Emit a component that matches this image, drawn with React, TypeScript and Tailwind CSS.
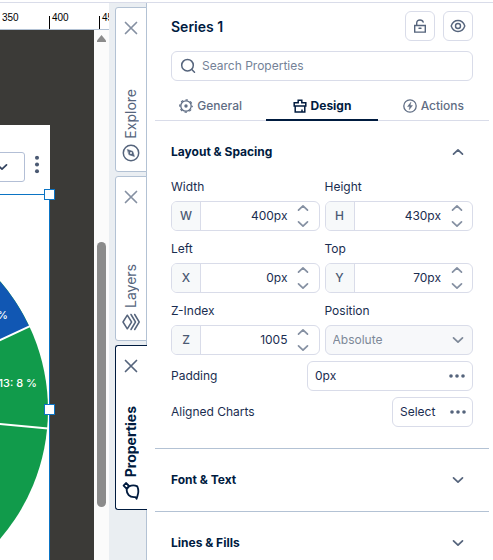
import React from "react";

type IconProps = { className?: string };

const stroke = {
  fill: "none",
  stroke: "currentColor",
  strokeWidth: 1.5,
  strokeLinecap: "round" as const,
  strokeLinejoin: "round" as const,
};

function CloseIcon({ className }: IconProps) {
  return (
    <svg viewBox="0 0 14 14" className={className} {...stroke} strokeWidth={1.7} aria-hidden="true">
      <path d="M1.500 1.500l11 11M12.500 1.500l-11 11" />
    </svg>
  );
}

function ChevronIcon({ up = false, className }: IconProps & { up?: boolean }) {
  return (
    <svg viewBox="0 0 12 8" className={className} {...stroke} strokeWidth={1.7} aria-hidden="true">
      <path d={up ? "M1.500 6.200L6 1.800l4.500 4.400" : "M1.500 1.800L6 6.200l4.500-4.400"} />
    </svg>
  );
}

function DotsIcon({ className }: IconProps) {
  return (
    <svg viewBox="0 0 16 4" className={className} fill="currentColor" aria-hidden="true">
      <circle cx="2" cy="2" r="1.8" />
      <circle cx="8" cy="2" r="1.8" />
      <circle cx="14" cy="2" r="1.8" />
    </svg>
  );
}

function CompassIcon() {
  return (
    <svg viewBox="0 0 18 18" className="size-[18px] shrink-0" {...stroke} aria-hidden="true">
      <circle cx="9" cy="9" r="7.7" />
      <path d="M5.600 5.600l5.200 1.800 1.600 5-5.200-1.600z" fill="currentColor" strokeWidth="0.600" />
      <circle cx="9" cy="9" r="1" fill="white" stroke="none" />
    </svg>
  );
}

function LayersIcon() {
  return (
    <svg viewBox="0 0 18 18" className="size-[18px] shrink-0" {...stroke} strokeWidth={1.500} aria-hidden="true">
      <path d="M5.300 2.200L9.600 9l-4.300 6.800L1 9z" />
      <path d="M9 1.500L13.500 9 9 16.500M12.700 1.500L17.200 9l-4.500 7.500" />
    </svg>
  );
}

function PropertiesIcon() {
  return (
    <svg viewBox="0 0 18 18" className="size-[18px] shrink-0" {...stroke} strokeWidth={1.800} aria-hidden="true">
      <path d="M4 1L7 4 4.800 6.800 1.600 3.600z" />
      <path d="M7 4.400c2.600-1.300 6-1.300 8.300 0 1.200 2.800 1.300 6.200.3 9l-1 3.400-1.200-1.700c-3 .3-5.200-.3-6.700-2-1.500-1.700-2.300-4-1.900-6.300z" />
    </svg>
  );
}

function GearIcon() {
  return (
    <svg viewBox="0 0 14 14" className="size-[14px] shrink-0" fill="none" stroke="currentColor" aria-hidden="true">
      <circle cx="7" cy="7" r="5.200" strokeWidth="1.300" />
      <circle cx="7" cy="7" r="6.200" strokeWidth="1.300" strokeDasharray="2.400 2.470" strokeDashoffset="1.200" />
      <circle cx="7" cy="7" r="1.700" fill="currentColor" stroke="none" />
    </svg>
  );
}

function BrushIcon() {
  return (
    <svg viewBox="0 0 14 14" className="size-[14px] shrink-0" {...stroke} strokeWidth={1.500} strokeLinecap="butt" strokeLinejoin="miter" aria-hidden="true">
      <path d="M5.200 3.800V1.200h3.600v2.600h4V7H1.200V3.800z" />
      <path d="M2.200 7v6h9.600V7M9 13v-2.500" />
    </svg>
  );
}

function BoltIcon() {
  return (
    <svg viewBox="0 0 14 14" className="size-[14px] shrink-0" {...stroke} strokeWidth={1.300} aria-hidden="true">
      <circle cx="7" cy="7" r="6.200" />
      <path d="M7.800 3.300L4.500 7.600h2.200l-.5 3.200 3.300-4.300H7.300z" fill="currentColor" strokeWidth="0.400" />
    </svg>
  );
}

function LockIcon() {
  return (
    <svg viewBox="0 0 14 14" className="size-[14px]" {...stroke} strokeWidth={1.400} strokeLinejoin="miter" aria-hidden="true">
      <path d="M1.700 6.500h10.600v6.600H1.700z" />
      <path d="M3.700 6.300V4.200C3.700 2.200 5 1 7 1c1.700 0 2.900.8 3.200 2.100M6 9.300h2" />
    </svg>
  );
}

function EyeIcon() {
  return (
    <svg viewBox="0 0 16 14" className="h-[14px] w-4" {...stroke} strokeWidth={1.400} aria-hidden="true">
      <path d="M1.200 7C2.500 3.300 5 1.500 8 1.500s5.500 1.800 6.800 5.500c-1.300 3.700-3.800 5.500-6.800 5.500S2.500 10.700 1.200 7z" />
      <circle cx="8" cy="7" r="2.500" />
    </svg>
  );
}

function SearchIcon() {
  return (
    <svg viewBox="0 0 16 16" className="size-4 shrink-0 text-[#55647c]" {...stroke} aria-hidden="true">
      <circle cx="7.500" cy="7.200" r="5.800" />
      <path d="M11.800 11.500l2.700 2.700" />
    </svg>
  );
}

function Ruler() {
  return (
    <div className="flex h-[27px] shrink-0 overflow-hidden border-b border-[#b3c2d4] bg-white">
      {["350", "400", "450"].map((mark, i) => (
        <div key={mark} className={`flex w-[50px] shrink-0 items-end gap-[2px] ${i === 0 ? "-ml-px" : ""}`}>
          <span className="h-[13px] w-px bg-black" />
          <span className="pb-1 font-['Liberation_Sans',Arial,sans-serif] text-[10px] leading-[14px] text-black">{mark}</span>
        </div>
      ))}
    </div>
  );
}

function Canvas() {
  return (
    <div className="relative min-w-0 flex-1 overflow-hidden bg-[#3b3a37]">
      <div className="absolute top-[95px] right-[44px] bottom-0 left-0 bg-white">
        <div className="flex items-center justify-end gap-[7px] pt-[27px] pr-2 text-[#4b5a73]">
          <button type="button" aria-label="Chart options" className="flex h-[30px] w-[60px] shrink-0 items-center justify-end rounded-[3px] border border-[#b3bfd6] pr-4">
            <ChevronIcon className="h-2 w-3 shrink-0 text-[#33435f]" />
          </button>
          <button type="button" aria-label="More" className="flex w-[10px] shrink-0 justify-center">
            <DotsIcon className="mb-[6px] h-[5px] w-[18px] shrink-0 rotate-90" />
          </button>
        </div>
      </div>
      <svg viewBox="0 0 94 530" className="absolute top-0 right-0 h-[530px] w-[94px] overflow-visible" aria-label="Pie chart">
        <circle cx="-149.300" cy="380" r="197.300" fill="#119b4b" />
        <path d="M-149.300 380L29.200 296.500A197.300 197.300 0 0 0 -149.300 182.700z" fill="#1157b3" />
        <path d="M-149.300 380L30 296.200M-149.300 380L48 398.500" stroke="white" strokeWidth="2" />
        <g fill="white" className="font-[Inter,sans-serif] text-[11px] font-medium" textAnchor="end">
          <text x="8" y="289">%</text>
          <text x="37" y="357">13: 8 %</text>
        </g>
        <path d="M-400 164.500H49.500V530" fill="none" stroke="#0b74c4" />
        <g fill="white" stroke="#0b74c4">
          <rect x="44.500" y="159.500" width="10" height="10" />
          <rect x="44.500" y="374.500" width="10" height="10" />
        </g>
      </svg>
    </div>
  );
}

function Scrollbar() {
  return (
    <div className="flex w-[15px] shrink-0 flex-col items-center bg-[#fbfbfb] pt-[5px]">
      <svg viewBox="0 0 9 7" className="h-[7px] w-[9px]" fill="#8b8b8b" aria-hidden="true">
        <path d="M4.500 0L9 5.500V7H0V5.500z" />
      </svg>
      <div className="mt-[200px] h-[265px] w-[9px] rounded-full bg-[#8b8b8b]" />
    </div>
  );
}

function SideTab({ label, icon, active = false }: { label: string; icon: React.ReactNode; active?: boolean }) {
  return (
    <div
      className={`flex h-[165px] flex-col items-center justify-between rounded-l-[3px] border bg-white pt-[13px] pb-[9px] ${
        active ? "border-r-0 border-[#001b3f] pr-px text-[#001b3f]" : "border-[#b3c2d4] text-[#55647c]"
      }`}
    >
      <button type="button" aria-label={`Close ${label}`} className="flex">
        <CloseIcon className={active ? "size-[14px] text-[#55647c]" : "size-[14px] text-[#8590a2]"} />
      </button>
      <button type="button" className="flex flex-col items-center gap-[5px]">
        <span className={`rotate-180 text-[14px] leading-[18px] [writing-mode:vertical-rl] ${active ? "font-bold" : ""}`}>{label}</span>
        {icon}
      </button>
    </div>
  );
}

function NumberField({ label, prefix, value }: { label: string; prefix: string; value: string }) {
  const id = `field-${prefix}`;
  return (
    <div className="flex min-w-0 flex-col gap-1">
      <label htmlFor={id} className="leading-[20px]">
        {label}
      </label>
      <div className="flex h-[30px] overflow-hidden rounded-[6px] border border-[#d9dce9] bg-white">
        <span className="flex w-[29px] shrink-0 items-center justify-center border-r border-[#d9dce9] bg-[#f7f9fa] font-medium text-[#4b5a73]">{prefix}</span>
        <input id={id} type="text" defaultValue={value} className="min-w-0 flex-1 text-right outline-none" />
        <div className="flex w-[31px] shrink-0 flex-col items-center justify-between py-[2px] text-[#8590a2]">
          <button type="button" aria-label={`Increase ${label}`} className="flex">
            <ChevronIcon up className="h-2 w-3" />
          </button>
          <button type="button" aria-label={`Decrease ${label}`} className="flex">
            <ChevronIcon className="h-2 w-3" />
          </button>
        </div>
      </div>
    </div>
  );
}

function PositionField() {
  return (
    <div className="flex min-w-0 flex-col gap-1">
      <label htmlFor="position" className="leading-[20px]">
        Position
      </label>
      <div className="relative h-[30px]">
        <select
          id="position"
          disabled
          className="h-full w-full appearance-none rounded-[6px] border border-[#d9dce9] bg-[#f7f8fa] px-[7px] text-[#7d8898] opacity-100"
        >
          <option>Absolute</option>
        </select>
        <ChevronIcon className="pointer-events-none absolute top-[11px] right-[9px] h-2 w-3 text-[#7d8898]" />
      </div>
    </div>
  );
}

function SectionHeader({ title, open = false }: { title: string; open?: boolean }) {
  return (
    <button type="button" aria-expanded={open} className="flex h-[62px] w-full items-center justify-between px-4 text-[#001b3f]">
      <span className="font-bold">{title}</span>
      <ChevronIcon up={open} className="mr-[9px] h-2 w-3 text-[#55647c]" />
    </button>
  );
}

function PropertiesPanel() {
  const tabs = [
    { label: "General", icon: <GearIcon />, active: false },
    { label: "Design", icon: <BrushIcon />, active: true },
    { label: "Actions", icon: <BoltIcon />, active: false },
  ];
  return (
    <main className="min-w-0 flex-1 overflow-y-auto bg-white pr-1 pl-2 text-[12px] text-[#1a2d50] [scrollbar-width:none]">
      <header className="flex items-center justify-between px-4 pt-2">
        <h1 className="text-[14px] font-semibold text-[#001b3f]">Series 1</h1>
        <div className="flex gap-2 text-[#55647c]">
          <button type="button" aria-label="Lock" className="flex size-[30px] items-center justify-center rounded-[6px] border border-[#d9dce9]">
            <LockIcon />
          </button>
          <button type="button" aria-label="Visibility" className="flex size-[30px] items-center justify-center rounded-[6px] border border-[#d9dce9]">
            <EyeIcon />
          </button>
        </div>
      </header>
      <div className="px-4 pt-[10px]">
        <label className="flex h-[30px] items-center gap-[6px] rounded-[6px] border border-[#d9dce9] px-2">
          <SearchIcon />
          <input type="search" aria-label="Search Properties" placeholder="Search Properties" className="min-w-0 flex-1 outline-none placeholder:text-[#748297]" />
        </label>
      </div>
      <nav className="mt-2 flex h-8 border-b border-[#d9dce9]">
        {tabs.map((tab) => (
          <button
            key={tab.label}
            type="button"
            className={`-mb-px flex flex-1 items-center justify-center gap-1 border-b-2 pt-[3px] ${
              tab.active ? "border-[#001b3f] font-bold text-[#001b3f]" : "border-transparent font-medium text-[#5f6d84]"
            }`}
          >
            {tab.icon}
            {tab.label}
          </button>
        ))}
      </nav>
      <section className="border-b border-[#b3c2d4] pb-[21px]">
        <SectionHeader title="Layout & Spacing" open />
        <div className="flex flex-col gap-[6px] px-4">
          <div className="-mt-[6px] grid grid-cols-2 gap-x-[5px] gap-y-2">
            <NumberField label="Width" prefix="W" value="400px" />
            <NumberField label="Height" prefix="H" value="430px" />
            <NumberField label="Left" prefix="X" value="0px" />
            <NumberField label="Top" prefix="Y" value="70px" />
            <NumberField label="Z-Index" prefix="Z" value="1005" />
            <PositionField />
          </div>
          <div className="flex items-center justify-between">
            <label htmlFor="padding">Padding</label>
            <div className="flex h-[30px] w-[166px] items-center rounded-[6px] border border-[#d9dce9] px-[7px]">
              <input id="padding" type="text" defaultValue="0px" className="min-w-0 flex-1 outline-none" />
              <button type="button" aria-label="Edit padding" className="flex">
                <DotsIcon className="h-1 w-4 text-[#55647c]" />
              </button>
            </div>
          </div>
          <div className="flex items-center justify-between">
            <span id="aligned-charts">Aligned Charts</span>
            <button type="button" aria-describedby="aligned-charts" className="flex h-[30px] w-[81px] items-center justify-between rounded-[6px] border border-[#d9dce9] pr-[6px] pl-[7px]">
              Select
              <DotsIcon className="h-1 w-4 text-[#55647c]" />
            </button>
          </div>
        </div>
      </section>
      <section className="border-b border-[#b3c2d4]">
        <SectionHeader title="Font & Text" />
      </section>
      <section>
        <SectionHeader title="Lines & Fills" />
      </section>
    </main>
  );
}

export default function App() {
  return (
    <div className="flex h-screen flex-col overflow-hidden bg-white font-[Inter,'Open_Sans',sans-serif]">
      <div className="h-[3px] shrink-0 border-b border-[#d9dce9]" />
      <div className="flex min-h-0 flex-1">
        <div className="flex min-w-0 flex-1 flex-col">
          <Ruler />
          <div className="flex min-h-0 flex-1">
            <Canvas />
            <Scrollbar />
          </div>
        </div>
        <div className="flex w-[384px] shrink-0">
          <aside className="flex w-[38px] shrink-0 flex-col border-r border-[#b3c2d4] bg-[#eaeef2] pt-1 pl-[6px]">
            <div className="-mr-px flex flex-col gap-1">
              <SideTab label="Explore" icon={<CompassIcon />} />
              <SideTab label="Layers" icon={<LayersIcon />} />
              <SideTab label="Properties" icon={<PropertiesIcon />} active />
            </div>
          </aside>
          <PropertiesPanel />
        </div>
      </div>
    </div>
  );
}
